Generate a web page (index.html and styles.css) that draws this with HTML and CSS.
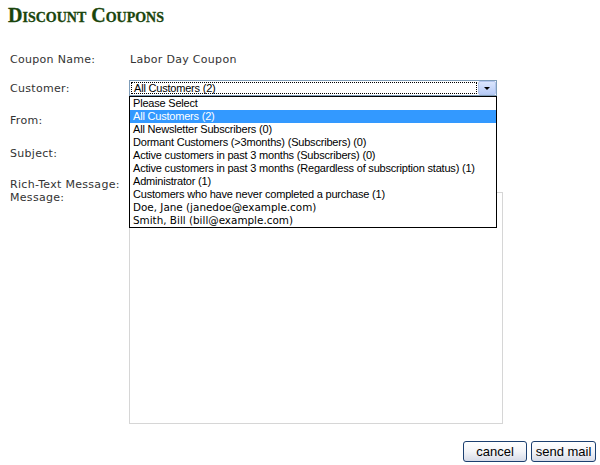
FILE: index.html
```
<!DOCTYPE html>
<html>
<head>
    <title>Discount Coupons</title>
    <link rel="stylesheet" href="styles.css">
</head>
<body>

    <h1 class="page-title">Discount Coupons</h1>

    <form class="mail-form" action="#" method="post">
        <div class="row row-name">
            <label>Coupon Name:</label>
            <span class="value">Labor Day Coupon</span>
        </div>

        <div class="row row-customer">
            <label>Customer:</label>
            <div class="select-wrap">
                <div class="select">
                    <span class="select-text">All Customers (2)</span>
                    <span class="select-arrow"></span>
                </div>
                <!-- opened list of the customer select -->
                <ul class="dropdown">
                    <li>Please Select</li>
                    <li class="selected">All Customers (2)</li>
                    <li>All Newsletter Subscribers (0)</li>
                    <li>Dormant Customers (&gt;3months) (Subscribers) (0)</li>
                    <li>Active customers in past 3 months (Subscribers) (0)</li>
                    <li>Active customers in past 3 months (Regardless of subscription status) (1)</li>
                    <li>Administrator (1)</li>
                    <li>Customers who have never completed a purchase (1)</li>
                    <li class="person">Doe, Jane (janedoe@example.com)</li>
                    <li class="person">Smith, Bill (bill@example.com)</li>
                </ul>
            </div>
        </div>

        <div class="row row-from">
            <label>From:</label>
            <input type="text" class="text-input" name="from">
        </div>

        <div class="row row-subject">
            <label>Subject:</label>
            <input type="text" class="text-input" name="subject">
        </div>

        <div class="row row-rich">
            <label>Rich-Text Message:</label>
        </div>

        <div class="row row-message">
            <label>Message:</label>
            <textarea class="message" name="message"></textarea>
        </div>

        <div class="buttons">
            <button type="button" class="btn">cancel</button>
            <button type="submit" class="btn">send mail</button>
        </div>
    </form>

</body>
</html>
```

FILE: styles.css
```
/* page basics */
body {
    font-family: "DejaVu Sans", Verdana, sans-serif;
    font-size: 11px;
    color: #333;
    background-color: #fff;
    margin: 0;
    padding: 0 4px 0 8px;
}

.page-title {
    margin: 0;
    padding-top: 4px;
    font-family: "Liberation Serif", "Times New Roman", serif;
    font-size: 20px;
    font-weight: bold;
    font-variant: small-caps;
    line-height: 22px;
    color: #1a450c;
    -webkit-text-stroke: 0.3px #1a450c;
}

/* form rows */
.mail-form {
    margin-top: 20px;
    padding-left: 2px;
}

.row {
    display: flex;
    align-items: center;
}

.row label,
.row .value {
    line-height: 13px;
    letter-spacing: 0.3px;
}

.row label {
    width: 120px;
    flex-shrink: 0;
}

.row-name { height: 26px; }
.row-customer { height: 32px; }
.row-from { height: 32px; }
.row-subject { height: 34px; }

.row-rich {
    height: 21px;
    align-items: flex-start;
}

.row-rich label {
    padding-top: 8px;
    white-space: nowrap;
}

.row-message {
    align-items: flex-start;
}

/* customer select, shown open */
.select-wrap {
    position: relative;
    margin-left: -1px;
}

.select {
    width: 368px;
    height: 16px;
    box-sizing: border-box;
    border: 1px solid #7f9db9;
    background-color: #fff;
    display: flex;
    align-items: stretch;
    font-family: "Liberation Sans", Arial, sans-serif;
    font-size: 11px;
    color: #000;
}

.select-text {
    flex: 1;
    margin: 1px;
    border: 1px dotted #000;
    padding-left: 2px;
    line-height: 10px;
    letter-spacing: -0.2px;
}

.select-arrow {
    width: 16px;
    border: 1px solid #b3c6ee;
    border-radius: 2px;
    background: linear-gradient(#dbe6fd, #b7cbf6);
    position: relative;
}

.select-arrow::after {
    content: "";
    position: absolute;
    left: 5px;
    top: 5px;
    border-left: 3px solid transparent;
    border-right: 3px solid transparent;
    border-top: 3px solid #000;
}

.dropdown {
    position: absolute;
    top: 100%;
    left: 0;
    z-index: 5;
    width: 368px;
    box-sizing: border-box;
    margin: 0;
    padding: 0;
    list-style: none;
    border: 1px solid #000;
    background-color: #fff;
    font-family: "Liberation Sans", Arial, sans-serif;
    font-size: 11px;
    color: #000;
}

.dropdown li {
    height: 13px;
    line-height: 13px;
    padding-left: 3px;
    letter-spacing: -0.2px;
    white-space: nowrap;
}

.dropdown li.selected {
    background-color: #3399ff;
    color: #fff;
}

.dropdown li.person {
    font-family: "DejaVu Sans", Verdana, sans-serif;
    font-size: 10.4px;
    letter-spacing: 0;
}

/* inputs hidden under the open list */
.text-input {
    width: 300px;
    height: 18px;
    margin-left: -1px;
    box-sizing: border-box;
    border: 1px solid #ccc;
}

.message {
    width: 374px;
    height: 232px;
    margin: 1px 0 0 -1px;
    box-sizing: border-box;
    border: 1px solid #d6d6d6;
    resize: none;
}

/* buttons */
.buttons {
    display: flex;
    justify-content: flex-end;
    gap: 4px;
    margin-top: 17px;
}

.btn {
    height: 21px;
    box-sizing: border-box;
    padding: 0;
    border: 1px solid #1c3f70;
    border-radius: 3px;
    background: linear-gradient(#ffffff 0%, #f3f4f8 50%, #d6dbe8 100%);
    font-family: "Liberation Sans", Arial, sans-serif;
    font-size: 13px;
    color: #000;
    cursor: pointer;
}

.btn:first-child {
    width: 64px;
}

.btn:last-child {
    width: 65px;
}
```
